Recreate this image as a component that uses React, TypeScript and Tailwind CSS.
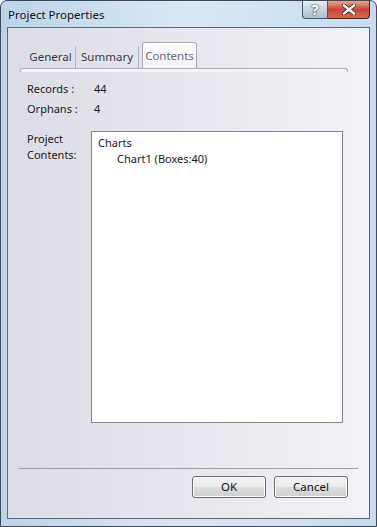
import React from "react";

const font = { fontFamily: '"Noto Sans", "Open Sans", sans-serif' };

function TitleButtons() {
  return (
    <div className="flex h-[18px]">
      {/* help */}
      <div className="w-[26px] h-[18px] border border-[#4a5868] border-t-0 rounded-bl-[4px] bg-gradient-to-b from-[#e6edf4] via-[#c5d3e2] to-[#aebfd2] flex items-center justify-center text-white text-[15px] font-bold leading-none [text-shadow:0_0_1px_#2b3a4c,0_0_2px_#2b3a4c]">
        ?
      </div>
      {/* close */}
      <div className="w-[42px] h-[18px] border border-[#4a2020] border-t-0 border-l-0 rounded-br-[4px] bg-gradient-to-b from-[#e6a394] via-[#c7453a] to-[#d36a4f] flex items-center justify-center">
        <svg width="14" height="11" viewBox="0 0 14 11">
          <path d="M2 1.5 L12 9.5 M12 1.5 L2 9.5" stroke="#3a1a1a" strokeWidth="4" strokeLinecap="square" />
          <path d="M2 1.5 L12 9.5 M12 1.5 L2 9.5" stroke="#ffffff" strokeWidth="2.4" strokeLinecap="square" />
        </svg>
      </div>
    </div>
  );
}

export default function App() {
  return (
    <div
      className="w-[377px] h-[527px] border border-[#3c4a5a] rounded-t-[7px] bg-gradient-to-r from-[#bcd3ea] via-[#dbe8f4] to-[#c6dbee] flex flex-col"
      style={font}
    >
      {/* title bar */}
      <div className="h-[26px] flex justify-between pl-[7px] pr-[6px]">
        <div className="pt-[6px] text-[11.5px] text-[#111] leading-[16px]">Project Properties</div>
        <TitleButtons />
      </div>

      {/* client area */}
      <div className="flex-1 mx-[6px] mb-[7px] border border-[#5a6878] bg-gradient-to-r from-[#dcdce6] to-[#f1f1f6] flex flex-col text-[11px] text-[#1a1a1a]">
        {/* tabs */}
        <div className="flex ml-[18px] mt-[14px] h-[26px] text-[11.5px]">
          <div className="w-[50px] h-[22px] mt-[4px] flex items-center justify-center text-[#3a3a44] border-r border-[#b4b4bc]">
            General
          </div>
          <div className="w-[63px] h-[22px] mt-[4px] flex items-center justify-center text-[#3a3a44] border-r border-[#b4b4bc]">
            Summary
          </div>
          <div className="ml-[3px] w-[55px] h-[26px] border border-b-0 border-[#a9a9b4] rounded-t-[3px] bg-gradient-to-b from-[#fbfbfd] to-[#f3f3f7] flex items-center justify-center text-[#6a6a74] -mb-[1px] relative z-10">
            Contents
          </div>
        </div>
        <div className="ml-[12px] w-[328px] h-[4px] border border-b-0 border-[#b0b0ba] rounded-t-[3px] bg-[#f4f4f8]" />

        {/* info rows */}
        <div className="flex ml-[19px] mt-[9px] h-[16px] items-center">
          <div className="w-[67px]">Records :</div>
          <div>44</div>
        </div>
        <div className="flex ml-[19px] mt-[4px] h-[16px] items-center">
          <div className="w-[67px]">Orphans :</div>
          <div>4</div>
        </div>

        {/* contents */}
        <div className="flex ml-[19px] mt-[14px]">
          <div className="w-[64px] leading-[16px]">
            Project
            <br />
            Contents:
          </div>
          <div className="w-[252px] h-[292px] bg-white border border-[#828790] pl-[6px] pt-[3px] leading-[16px]">
            <div>Charts</div>
            <div className="pl-[19px]">Chart1 (Boxes:40)</div>
          </div>
        </div>

        {/* separator */}
        <div className="ml-[11px] mt-[45px] w-[339px] h-[1px] bg-[#a0a0a8]" />

        {/* buttons */}
        <div className="flex justify-end gap-[8px] mt-[7px] mr-[21px]">
          {["OK", "Cancel"].map((b) => (
            <div
              key={b}
              className="w-[74px] h-[22px] border border-[#707070] rounded-[3px] bg-[linear-gradient(to_bottom,#f2f2f2_0%,#ebebeb_50%,#dddddd_51%,#cfcfcf_100%)] flex items-center justify-center text-[11.5px] text-[#111] shadow-[inset_0_0_0_1px_#fcfcfc]"
            >
              {b}
            </div>
          ))}
        </div>
      </div>
    </div>
  );
}
